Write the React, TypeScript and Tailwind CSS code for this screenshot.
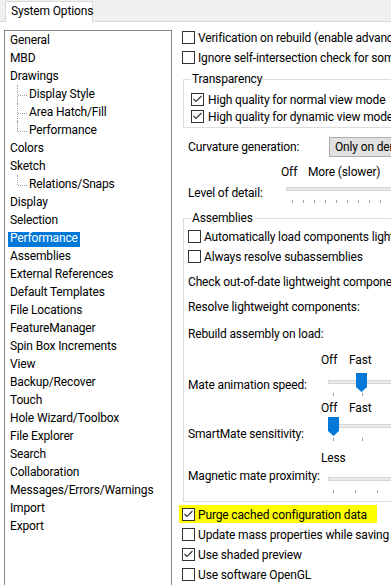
import React from "react";

type TreeItem = { label: string; level: 0 | 1; last?: boolean; selected?: boolean };

const tree: TreeItem[] = [
  { label: "General", level: 0 },
  { label: "MBD", level: 0 },
  { label: "Drawings", level: 0 },
  { label: "Display Style", level: 1 },
  { label: "Area Hatch/Fill", level: 1 },
  { label: "Performance", level: 1, last: true },
  { label: "Colors", level: 0 },
  { label: "Sketch", level: 0 },
  { label: "Relations/Snaps", level: 1, last: true },
  { label: "Display", level: 0 },
  { label: "Selection", level: 0 },
  { label: "Performance", level: 0, selected: true },
  { label: "Assemblies", level: 0 },
  { label: "External References", level: 0 },
  { label: "Default Templates", level: 0 },
  { label: "File Locations", level: 0 },
  { label: "FeatureManager", level: 0 },
  { label: "Spin Box Increments", level: 0 },
  { label: "View", level: 0 },
  { label: "Backup/Recover", level: 0 },
  { label: "Touch", level: 0 },
  { label: "Hole Wizard/Toolbox", level: 0 },
  { label: "File Explorer", level: 0 },
  { label: "Search", level: 0 },
  { label: "Collaboration", level: 0 },
  { label: "Messages/Errors/Warnings", level: 0 },
  { label: "Import", level: 0 },
  { label: "Export", level: 0 },
];

function Box({ checked }: { checked?: boolean }) {
  return (
    <span className="relative block flex-none w-[13px] h-[13px] border border-[#333333] bg-white">
      {checked && (
        <svg className="absolute left-0 top-0" width="11" height="11" viewBox="0 0 11 11">
          <path d="M1.5 5 L4 7.5 L9.5 2" fill="none" stroke="#333333" strokeWidth="1.1" />
        </svg>
      )}
    </span>
  );
}

function Check({ label, checked, wide }: { label: string; checked?: boolean; wide?: boolean }) {
  return (
    <div className={"flex items-center h-[13px] whitespace-nowrap " + (wide ? "gap-[4px]" : "gap-[3px]")}>
      <Box checked={checked} />
      <span className="leading-[14px]">{label}</span>
    </div>
  );
}

function Track() {
  return <div className="h-[4px] w-[300px] border border-[#d6d6d6] bg-[#e7eaea]" />;
}

function Ticks({ count, cell }: { count: number; cell: "w-[11px]" | "w-[29px]" | "w-[22px]" }) {
  return (
    <div className="flex h-[3px]">
      {Array.from({ length: count }).map((_, i) => (
        <div key={i} className={"flex-none h-[3px] border-l border-[#a0a0a0] " + cell} />
      ))}
    </div>
  );
}

function Thumb() {
  return (
    <svg width="11" height="19" viewBox="0 0 11 19">
      <polygon points="0,0 11,0 11,14 5.5,19 0,14" fill="#0078d7" />
    </svg>
  );
}

function Legend({ text }: { text: string }) {
  return (
    <span className="absolute left-[7px] top-[-8px] bg-white px-[1px] leading-[14px]">{text}</span>
  );
}

export default function App() {
  return (
    <div className="w-[391px] h-[585px] overflow-hidden bg-white text-[12px] tracking-[-0.15px] text-black [font-family:Roboto,'Liberation_Sans',sans-serif]">
      {/* tab strip */}
      <div className="h-[22px] bg-[#f0f0f0] border-b border-[#d9d9d9] flex items-end">
        <div className="ml-[5px] -mb-px h-[21px] w-[88px] bg-white border border-b-0 border-[#d9d9d9] pl-[5px] leading-[19px] whitespace-nowrap">
          System Options
        </div>
      </div>

      <div className="flex">
        {/* tree */}
        <div className="flex-none ml-[4px] mt-[8px] w-[168px] h-[570px] border border-[#828790] bg-white">
          {tree.map((it, i) => (
            <div key={i} className="relative flex items-start h-[18px] pt-[3px] pl-[3px] whitespace-nowrap">
              {it.level === 1 && (
                <>
                  <div
                    className={
                      "absolute left-[12px] top-0 w-0 border-l border-dotted border-[#a0a0a0] " +
                      (it.last ? "h-[10px]" : "h-[18px]")
                    }
                  />
                  <div className="absolute left-[13px] top-[10px] w-[9px] h-0 border-t border-dotted border-[#a0a0a0]" />
                </>
              )}
              <span
                className={
                  "block h-[15px] leading-[12px] px-[2px] " +
                  (it.level === 1 ? "ml-[19px] " : "") +
                  (it.selected ? "bg-[#0078d7] text-white" : "")
                }
              >
                {it.label}
              </span>
            </div>
          ))}
        </div>

        {/* right panel */}
        <div className="flex-1 ml-[10px] pt-[9px] flex flex-col whitespace-nowrap">
          <Check label="Verification on rebuild (enable advanced entity checking)" />
          <div className="mt-[7px]">
            <Check label="Ignore self-intersection check for some sheet metal features" />
          </div>

          <div className="relative mt-[15px] ml-[1px] w-[260px] border border-[#dcdcdc]">
            <Legend text="Transparency" />
            <div className="pt-[13px] pl-[7px] pb-[4px] flex flex-col gap-[4px]">
              <Check checked wide label="High quality for normal view mode" />
              <Check checked wide label="High quality for dynamic view mode" />
            </div>
          </div>

          <div className="mt-[9px] h-[20px] flex items-center">
            <span className="w-[147px] pl-[6px] leading-[14px]">Curvature generation:</span>
            <div className="h-[20px] w-[120px] bg-[#e1e1e1] border border-[#adadad] pl-[5px] flex items-center leading-[14px]">
              Only on demand
            </div>
          </div>

          <div className="mt-[8px] h-[14px] flex leading-[14px] pl-[99px]">
            <span className="w-[27px]">Off</span>
            <span>More (slower)</span>
          </div>

          <div className="mt-[7px] flex">
            <span className="flex-none w-[104px] pl-[6px] leading-[14px]">Level of detail:</span>
            <div className="flex-1 pt-[1px]">
              <Track />
              <div className="mt-[9px] pl-[6px]">
                <Ticks count={12} cell="w-[11px]" />
              </div>
            </div>
          </div>

          <div className="relative mt-[15px] ml-[1px] w-[260px] border border-[#dcdcdc] pl-[4px] pt-[11px] pb-[8px] flex flex-col">
            <Legend text="Assemblies" />
            <Check label="Automatically load components lightweight" />
            <div className="mt-[7px]">
              <Check label="Always resolve subassemblies" />
            </div>
            <div className="mt-[12px] leading-[14px]">Check out-of-date lightweight components:</div>
            <div className="mt-[11px] leading-[14px]">Resolve lightweight components:</div>
            <div className="mt-[13px] leading-[14px]">Rebuild assembly on load:</div>

            <div className="mt-[12px] flex leading-[14px] pl-[133px]">
              <span className="w-[28px]">Off</span>
              <span>Fast</span>
            </div>
            <div className="mt-[6px] flex">
              <span className="flex-none w-[140px] pt-[5px] leading-[14px]">Mate animation speed:</span>
              <div className="relative flex-1 h-[23px]">
                <div className="pt-[7px]">
                  <Track />
                </div>
                <div className="mt-[9px] pl-[5px]">
                  <Ticks count={3} cell="w-[29px]" />
                </div>
                <div className="absolute left-[28px] top-0 leading-[0]">
                  <Thumb />
                </div>
              </div>
            </div>

            <div className="mt-[5px] flex leading-[14px] pl-[133px]">
              <span className="w-[28px]">Off</span>
              <span>Fast</span>
            </div>
            <div className="mt-[2px] flex">
              <span className="flex-none w-[140px] pt-[10px] leading-[14px]">SmartMate sensitivity:</span>
              <div className="relative flex-1 h-[24px]">
                <div className="pt-[7px]">
                  <Track />
                </div>
                <div className="mt-[10px] pl-[5px]">
                  <Ticks count={3} cell="w-[29px]" />
                </div>
                <div className="absolute left-0 top-0 leading-[0]">
                  <Thumb />
                </div>
              </div>
            </div>

            <div className="mt-[10px] leading-[14px] pl-[133px]">Less</div>
            <div className="mt-[4px] flex">
              <span className="flex-none w-[140px] leading-[14px]">Magnetic mate proximity:</span>
              <div className="flex-1 pt-[8px]">
                <Track />
                <div className="mt-[9px] pl-[5px]">
                  <Ticks count={3} cell="w-[22px]" />
                </div>
              </div>
            </div>
          </div>

          <div className="mt-[3px] -ml-[3px] w-[198px] h-[18px] bg-[#ffff00] pt-[3px] pl-[3px]">
            <Check checked label="Purge cached configuration data" />
          </div>
          <div className="mt-[5px]">
            <Check label="Update mass properties while saving document" />
          </div>
          <div className="mt-[7px]">
            <Check checked label="Use shaded preview" />
          </div>
          <div className="mt-[7px]">
            <Check label="Use software OpenGL" />
          </div>
        </div>
      </div>
    </div>
  );
}
